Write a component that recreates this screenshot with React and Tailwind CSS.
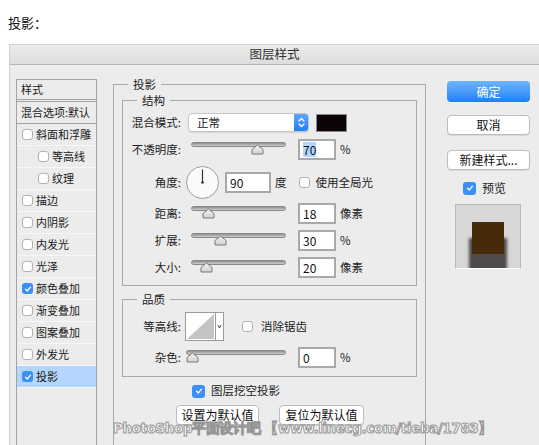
import React from 'react';

const Check = ({ on, big }) =>
  on ? (
    <span
      className={`${big ? 'w-[13px] h-[13px]' : 'w-[11px] h-[11px]'} rounded-[3px] bg-[#3c8ff7] flex items-center justify-center shrink-0`}
    >
      <svg viewBox="0 0 10 10" className="w-[8px] h-[8px]">
        <path d="M2 5.3 L4.2 7.4 L8.1 2.7" fill="none" stroke="white" strokeWidth="1.7" strokeLinecap="round" strokeLinejoin="round" />
      </svg>
    </span>
  ) : (
    <span className="w-[11px] h-[11px] rounded-[3px] bg-white border border-[#b2b2b2] shrink-0" />
  );

const Slider = ({ pos, wide }) => (
  <div className={`relative ${wide ? 'w-[100px]' : 'w-[95px]'} h-[18px] shrink-0`}>
    <div className="absolute left-0 right-0 top-[1px] h-[5px] rounded-full bg-gradient-to-b from-[#8e8e8e] to-[#cfcfcf] border border-[#888]" />
    <svg className="absolute top-[3px]" style={{ left: pos }} width="13" height="11" viewBox="0 0 13 11">
      <defs>
        <linearGradient id="th" x1="0" y1="0" x2="0" y2="1">
          <stop offset="0" stopColor="#f4f4f4" />
          <stop offset="1" stopColor="#cfcfcf" />
        </linearGradient>
      </defs>
      <path d="M1 10 V5.5 L6.5 1 L12 5.5 V10 Z" fill="url(#th)" stroke="#7a7a7a" strokeLinejoin="round" />
    </svg>
  </div>
);

const Field = ({ value, sel, wide }) => (
  <div
    className={`${wide ? 'w-[46px]' : 'w-[38px]'} h-[21px] bg-white border-2 border-[#a9a9a9] flex items-center pl-[3px] text-[12px] text-[#111] shrink-0`}
  >
    <span className={sel ? 'bg-[#b3d6fd] leading-[15px]' : 'leading-[15px]'}>{value}</span>
  </div>
);

const Label = ({ children }) => (
  <span className="w-[58px] text-right text-[11.5px] text-[#222] shrink-0">{children}</span>
);

const SliderRow = ({ label, pos, value, unit, sel, top }) => (
  <div className={`flex items-center h-[21px] ${top}`}>
    <Label>{label}</Label>
    <div className="ml-[10px]">
      <Slider pos={pos} />
    </div>
    <div className="ml-[12px]">
      <Field value={value} sel={sel} />
    </div>
    <span className="ml-[4px] text-[11.5px] text-[#222]">{unit}</span>
  </div>
);

const styles = [
  { name: '斜面和浮雕' },
  { name: '等高线', sub: true },
  { name: '纹理', sub: true },
  { name: '描边' },
  { name: '内阴影' },
  { name: '内发光' },
  { name: '光泽' },
  { name: '颜色叠加', on: true },
  { name: '渐变叠加' },
  { name: '图案叠加' },
  { name: '外发光' },
  { name: '投影', on: true, active: true },
];

const Btn = ({ children, w }) => (
  <div
    className={`${w} h-[20px] rounded-[4px] bg-white border border-[#bdbdbd] shadow-[0_1px_0_rgba(0,0,0,0.08)] flex items-center justify-center text-[12px] text-[#111]`}
  >
    {children}
  </div>
);

export default function App() {
  return (
    <div className="relative w-[539px] h-[445px] overflow-hidden bg-white font-['Noto_Sans_CJK_SC',sans-serif] text-[#222]">
      {/* caption */}
      <div className="h-[44px] pl-[8px] pt-[14px] text-[13px] leading-[18px] text-[#111]">投影：</div>

      {/* dialog */}
      <div className="ml-[9px] h-[401px] bg-[#ececec] border-l border-t border-[#cfcfcf] flex flex-col">
        <div className="h-[20px] shrink-0 bg-gradient-to-b from-[#ececec] to-[#dcdcdc] border-b border-[#b4b4b4] flex items-center justify-center text-[12.5px] text-[#333]">
          图层样式
        </div>

        <div className="flex flex-1 items-start">
          {/* left style list */}
          <div className="ml-[6px] mt-[14px] w-[81px] h-[400px] border border-[#a3a3a3] bg-[#ececec] text-[11px] text-[#1a1a1a] shrink-0">
            <div className="h-[22px] flex items-center pl-[4px] border-b-[3px] border-double border-[#a3a3a3]">样式</div>
            <div className="h-[22px] flex items-center pl-[4px] border-b border-[#a3a3a3] whitespace-nowrap">混合选项:默认</div>
            {styles.map((s) => (
              <div
                key={s.name}
                className={`h-[22px] flex items-center gap-[3px] border-b border-[#f7f7f7] ${s.sub ? 'pl-[21px]' : 'pl-[5px]'} ${s.active ? 'bg-[#b4d6fc]' : ''}`}
              >
                <Check on={s.on} />
                <span className="whitespace-nowrap">{s.name}</span>
              </div>
            ))}
          </div>

          {/* middle */}
          <fieldset className="ml-[16px] mt-[11px] w-[313px] h-[400px] border border-[#a9a9a9] shrink-0">
            <legend className="ml-[14px] px-[5px] text-[11.5px] leading-[16px]">投影</legend>

            <fieldset className="ml-[8px] w-[295px] border border-[#a9a9a9] pt-[4px] pb-[7px]">
              <legend className="ml-[14px] px-[5px] text-[11.5px] leading-[16px]">结构</legend>

              {/* blend mode */}
              <div className="flex items-center h-[21px]">
                <Label>混合模式:</Label>
                <div className="ml-[7px] w-[121px] h-[19px] rounded-[4px] bg-white border border-[#c6c6c6] shadow-[0_1px_1px_rgba(0,0,0,0.1)] flex items-center overflow-hidden shrink-0">
                  <span className="flex-1 pl-[8px] text-[11.5px] text-[#222]">正常</span>
                  <span className="w-[14px] h-full bg-gradient-to-b from-[#5aa6fb] to-[#1f7ff3] flex items-center justify-center">
                    <svg width="7" height="11" viewBox="0 0 7 11">
                      <path d="M1 4 L3.5 1.5 L6 4 M1 7 L3.5 9.5 L6 7" fill="none" stroke="white" strokeWidth="1.3" strokeLinecap="round" strokeLinejoin="round" />
                    </svg>
                  </span>
                </div>
                <div className="ml-[7px] w-[31px] h-[18px] bg-[#0b0308] border border-[#8a8a8a]" />
              </div>

              <SliderRow label="不透明度:" pos={60} value="70" unit="%" sel top="mt-[6px]" />

              {/* angle */}
              <div className="flex items-center h-[33px] mt-[6px]">
                <Label>角度:</Label>
                <div className="ml-[5px] w-[33px] h-[33px] shrink-0">
                  <svg width="33" height="33" viewBox="0 0 33 33">
                    <circle cx="16.5" cy="16.5" r="16" fill="#fafafa" stroke="#9c9c9c" />
                    <line x1="16.5" y1="16.5" x2="16.5" y2="3.5" stroke="#333" strokeWidth="1.2" />
                    <circle cx="16.5" cy="16.5" r="1.3" fill="#333" />
                  </svg>
                </div>
                <div className="ml-[6px]">
                  <Field value="90" wide />
                </div>
                <span className="ml-[4px] text-[11.5px]">度</span>
                <div className="ml-[12px] flex items-center">
                  <Check />
                </div>
                <span className="ml-[6px] text-[11.5px] whitespace-nowrap">使用全局光</span>
              </div>

              <SliderRow label="距离:" pos={11} value="18" unit="像素" top="mt-[4px]" />
              <SliderRow label="扩展:" pos={23} value="30" unit="%" top="mt-[6px]" />
              <SliderRow label="大小:" pos={9} value="20" unit="像素" top="mt-[6px]" />
            </fieldset>

            <fieldset className="ml-[8px] mt-[5px] w-[295px] border border-[#a9a9a9] pt-[5px] pb-[8px]">
              <legend className="ml-[14px] px-[5px] text-[11.5px] leading-[16px]">品质</legend>

              <div className="flex items-center h-[29px]">
                <Label>等高线:</Label>
                <div className="ml-[4px] w-[39px] h-[29px] shrink-0">
                  <svg width="39" height="29" viewBox="0 0 39 29">
                    <rect x="0.5" y="0.5" width="38" height="28" fill="white" stroke="#9a9a9a" />
                    <path d="M2 27 L29 2 V27 Z" fill="#c4c4c4" />
                    <line x1="30.5" y1="1" x2="30.5" y2="28" stroke="#9a9a9a" />
                    <path d="M33 13 L34.5 16 L36 13" fill="none" stroke="#333" strokeWidth="0.9" />
                  </svg>
                </div>
                <div className="ml-[18px] flex items-center">
                  <Check />
                </div>
                <span className="ml-[8px] text-[11.5px]">消除锯齿</span>
              </div>

              <div className="flex items-center h-[21px] mt-[6px]">
                <Label>杂色:</Label>
                <div className="ml-[5px]">
                  <Slider pos={0} wide />
                </div>
                <div className="ml-[12px]">
                  <Field value="0" />
                </div>
                <span className="ml-[4px] text-[11.5px]">%</span>
              </div>
            </fieldset>

            <div className="mt-[7px] ml-[78px] flex items-center gap-[6px] h-[14px]">
              <Check on big />
              <span className="text-[11.5px]">图层挖空投影</span>
            </div>

            <div className="mt-[7px] ml-[62px] flex gap-[20px]">
              <Btn w="w-[83px]">设置为默认值</Btn>
              <Btn w="w-[85px]">复位为默认值</Btn>
            </div>
          </fieldset>

          {/* right column */}
          <div className="ml-[21px] mt-[16px] w-[83px] flex flex-col shrink-0">
            <div className="h-[21px] rounded-[4px] bg-gradient-to-b from-[#6db4fb] to-[#1c80f5] flex items-center justify-center text-[12px] text-white">
              确定
            </div>
            <div className="mt-[13px]">
              <Btn w="w-[83px]">取消</Btn>
            </div>
            <div className="mt-[15px]">
              <Btn w="w-[83px]">新建样式...</Btn>
            </div>
            <div className="mt-[11px] ml-[16px] h-[14px] flex items-center gap-[6px]">
              <Check on big />
              <span className="text-[12px]">预览</span>
            </div>
            <div className="relative mt-[9px] ml-[8px] w-[66px] h-[65px] bg-[#d7d7d7] border-t border-l border-r border-[#b9b9b9] border-b border-b-white overflow-hidden">
              <div className="absolute left-[13px] top-[33px] w-[38px] h-[40px] bg-[#4f4a4b] blur-[1.5px]" />
              <div className="absolute left-[16px] top-[17px] w-[32px] h-[32px] bg-[#462a0a]" />
            </div>
          </div>
        </div>
      </div>

      {/* watermark */}
      <div className="absolute left-[113px] top-[418px] whitespace-nowrap font-['DejaVu_Sans',sans-serif] font-bold text-[13.5px] leading-[20px] text-white [-webkit-text-stroke:1px_#969696] tracking-[-0.4px]">
        PhotoShop平面设计吧 【www.linecg.com/tieba/1783】
      </div>
    </div>
  );
}
